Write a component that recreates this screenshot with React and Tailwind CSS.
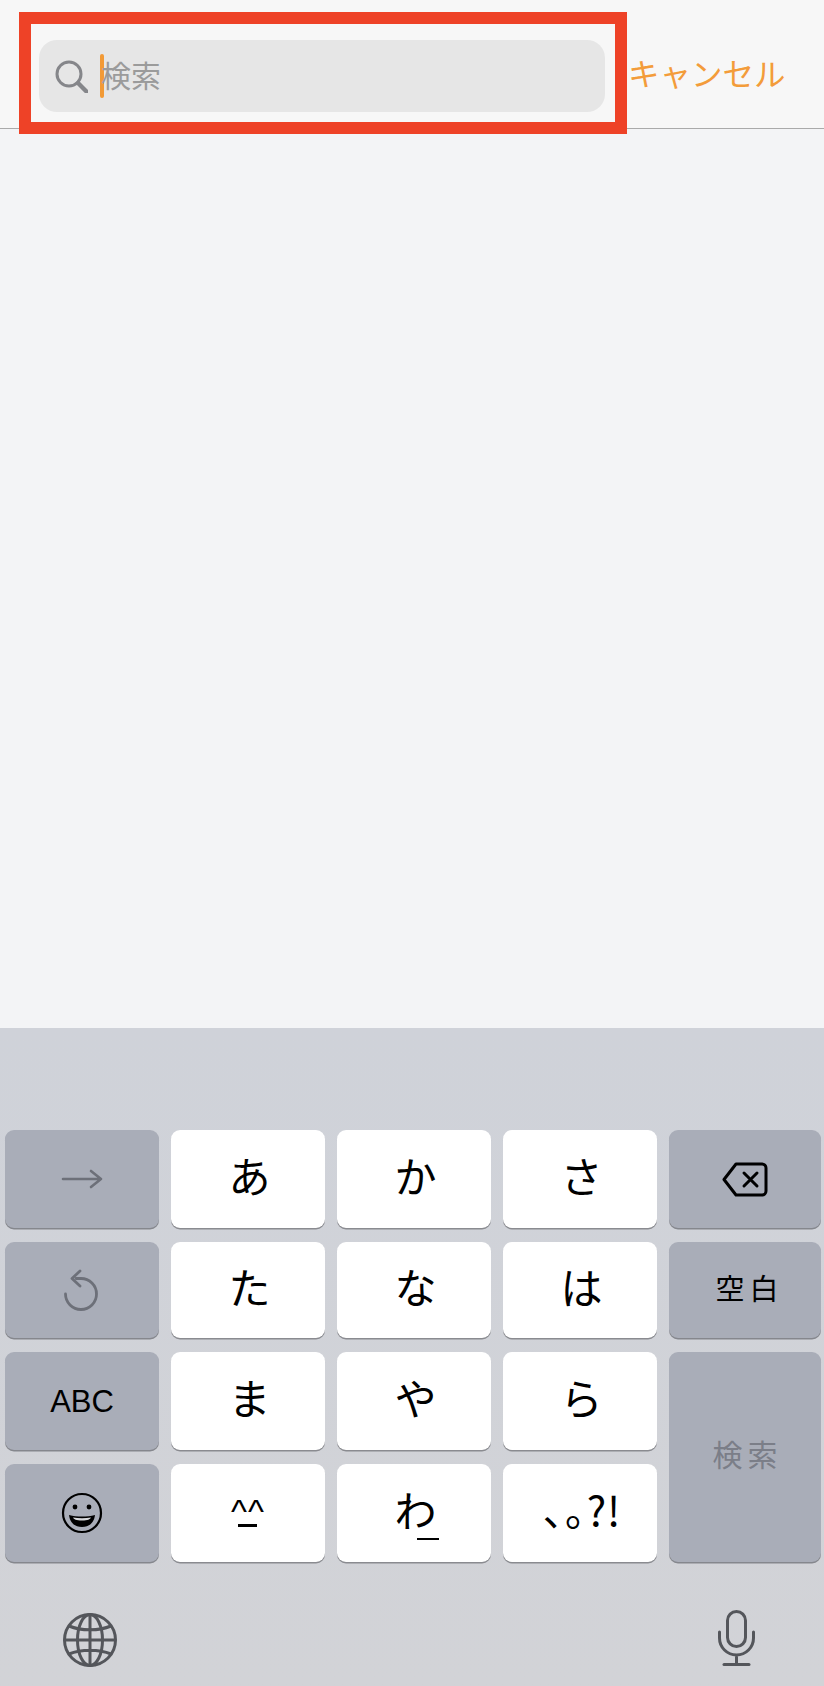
const jp = { fontFamily: '"Noto Sans CJK JP", sans-serif' };

function DarkKey({ children, className = '' }) {
  return (
    <div className={`flex items-center justify-center rounded-[9px] bg-[#a9adb8] shadow-[0_1.5px_0_#85878d] ${className}`}>
      {children}
    </div>
  );
}

function LightKey({ children }) {
  return (
    <div className="flex items-center justify-center rounded-[9px] bg-white pb-[9px] pl-[3px] text-[42px] leading-none text-black shadow-[0_1.5px_0_#8a8b90]">
      {children}
    </div>
  );
}

export default function App() {
  return (
    <div className="relative flex h-[1686px] w-[824px] flex-col overflow-hidden bg-[#f3f4f6]" style={jp}>
      {/* Search header */}
      <div className="flex h-[129px] items-start border-b border-[#aaaaaa] bg-[#f7f7f7] pl-[39px] pt-10">
        <div className="flex h-[72px] w-[566px] items-center rounded-[18px] bg-[#e6e6e6] pl-4">
          <svg width="33" height="33" viewBox="0 0 33 33" fill="none" stroke="#85868a" strokeLinecap="round">
            <circle cx="14" cy="14" r="12" strokeWidth="3" />
            <path d="M23 23l8.5 8.5" strokeWidth="4.4" />
          </svg>
          <div className="ml-[12px] h-11 w-1 rounded-full bg-[#f29a36]" />
          <span className="-ml-[3px] pb-[4px] text-[30px] leading-none text-[#9b9b9b]">検索</span>
        </div>
        <span className="ml-[23px] mt-[9px] text-[31.5px] leading-[46px] text-[#f39c3a]">キャンセル</span>
      </div>

      {/* Red highlight over the search field */}
      <div className="absolute left-[19px] top-3 h-[122px] w-[608px] border-[12px] border-[#ee4227]" />

      <div className="flex-1" />

      {/* Keyboard */}
      <div className="flex h-[658px] flex-col bg-gradient-to-b from-[#cfd2d9] to-[#d2d3d7] pl-[5px] pt-[102px]">
        <div className="grid grid-cols-[154px_154px_154px_154px_152px] grid-rows-[98px_96px_98px_98px] gap-x-3 gap-y-[14px]">
          <DarkKey>
            <svg width="42" height="22" viewBox="0 0 42 22" fill="none" stroke="#6d7079" strokeWidth="2.6" strokeLinecap="round" strokeLinejoin="round">
              <path d="M2 11h38M30 3l10 8-10 8" />
            </svg>
          </DarkKey>
          <LightKey>あ</LightKey>
          <LightKey>か</LightKey>
          <LightKey>さ</LightKey>
          <DarkKey>
            <svg width="46" height="35" viewBox="0 0 46 35" fill="none" stroke="#000" strokeWidth="3" strokeLinecap="round" strokeLinejoin="round">
              <path d="M14 2h26a4 4 0 0 1 4 4v23a4 4 0 0 1-4 4H14L2 17.5z" />
              <path d="M22 11l13 13M35 11L22 24" />
            </svg>
          </DarkKey>

          <DarkKey>
            <svg className="-ml-[2px]" width="36" height="42" viewBox="0 0 36 42" fill="none" stroke="#6d7079" strokeWidth="2.8" strokeLinecap="round" strokeLinejoin="round">
              <path d="M2.5 25a15.5 15.5 0 1 0 15.5-15.5h-5" />
              <path d="M17 2L9 9.5 17 17" />
            </svg>
          </DarkKey>
          <LightKey>た</LightKey>
          <LightKey>な</LightKey>
          <LightKey>は</LightKey>
          <DarkKey>
            <span className="pb-[5px] pl-[9px] text-[29px] leading-none tracking-[5px] text-black">空白</span>
          </DarkKey>

          <DarkKey>
            <span className="text-[31px] leading-none text-black" style={{ fontFamily: '"Liberation Sans", sans-serif' }}>ABC</span>
          </DarkKey>
          <LightKey>ま</LightKey>
          <LightKey>や</LightKey>
          <LightKey>ら</LightKey>
          <DarkKey className="row-span-2">
            <span className="pb-[8px] pl-[5px] text-[30px] leading-none tracking-[5px] text-[#7b7e88]">検索</span>
          </DarkKey>

          <DarkKey>
            <svg width="42" height="42" viewBox="0 0 42 42" fill="none" stroke="#000" strokeWidth="2.2">
              <circle cx="21" cy="21" r="19" />
              <circle cx="14" cy="15" r="2.4" fill="#000" stroke="none" />
              <circle cx="28" cy="15" r="2.4" fill="#000" stroke="none" />
              <path d="M8 23c8 2 18 2 26 0-1 8-6 12-13 12S9 31 8 23z" fill="#000" stroke="none" />
              <path d="M12 25.5c6 1 12 1 18 0-1 2-3 3-9 3s-8-1-9-3z" fill="#d8d9dc" stroke="none" />
            </svg>
          </DarkKey>
          <LightKey>
            <div className="-ml-[3px] flex flex-col items-center pt-2" style={{ fontFamily: '"Liberation Sans", sans-serif' }}>
              <span className="text-[34px] leading-[26px] tracking-[1px]">^^</span>
              <div className="h-[3px] w-[19px] bg-black" />
            </div>
          </LightKey>
          <LightKey>
            <span className="relative">
              わ
              <span className="absolute left-[23px] top-[50px] h-[2px] w-[22px] bg-black" />
            </span>
          </LightKey>
          <LightKey>
            <span className="pl-[2px] text-[41px] tracking-[1px]">､｡?!</span>
          </LightKey>
        </div>

        {/* Globe and mic */}
        <div className="mt-[51px] flex items-start justify-between pl-[58px] pr-[69px]">
          <svg width="54" height="54" viewBox="0 0 54 54" fill="none" stroke="#54565b" strokeWidth="3">
            <circle cx="27" cy="27" r="25.5" />
            <ellipse cx="27" cy="27" rx="12.5" ry="25.5" />
            <path d="M27 1.5v51M1.5 27h51M6 13c12 5 30 5 42 0M6 41c12-5 30-5 42 0" />
          </svg>
          <svg className="-mt-[3px]" width="37" height="56" viewBox="0 0 37 56" fill="none" stroke="#54565b" strokeWidth="3" strokeLinecap="round">
            <rect x="9.5" y="1.5" width="18" height="35" rx="9" />
            <path d="M1.5 22v6a17 17 0 0 0 34 0v-6M18.5 45v9" />
            <path d="M6 54.5h25" strokeWidth="3" />
          </svg>
        </div>
      </div>
    </div>
  );
}
